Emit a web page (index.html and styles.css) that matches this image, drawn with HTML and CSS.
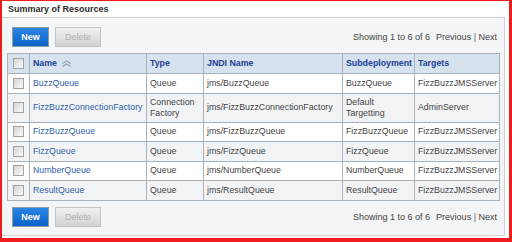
FILE: index.html
```html
<!DOCTYPE html>
<html>
<head>
<meta charset="utf-8">
<link rel="stylesheet" href="styles.css">
</head>
<body>
<div class="frame">
  <div class="heading">Summary of Resources</div>
  <div class="panel">
    <div class="toolbar">
      <div class="buttons">
        <span class="btn btn-new">New</span>
        <span class="btn btn-del">Delete</span>
      </div>
      <div class="pager">Showing 1 to 6 of 6<span class="gap"></span>Previous <span class="sep">|</span> Next</div>
    </div>
    <table class="grid">
      <colgroup>
        <col class="c-cb"><col class="c-name"><col class="c-type"><col class="c-jndi"><col class="c-sub"><col class="c-tgt">
      </colgroup>
      <thead>
        <tr>
          <th class="cb"><span class="check"></span></th>
          <th>Name <svg class="sort" width="11" height="7" viewBox="0 0 11 7"><polyline points="1.5,3.5 5.5,0.8 9.5,3.5" /><polyline points="1.5,6.5 5.5,3.8 9.5,6.5" /></svg></th>
          <th>Type</th>
          <th>JNDI Name</th>
          <th>Subdeployment</th>
          <th>Targets</th>
        </tr>
      </thead>
      <tbody>
        <tr>
          <td class="cb"><span class="check"></span></td>
          <td><a class="link">BuzzQueue</a></td>
          <td>Queue</td>
          <td>jms/BuzzQueue</td>
          <td>BuzzQueue</td>
          <td>FizzBuzzJMSServer</td>
        </tr>
        <tr class="tall">
          <td class="cb"><span class="check"></span></td>
          <td><a class="link">FizzBuzzConnectionFactory</a></td>
          <td>Connection<br>Factory</td>
          <td>jms/FizzBuzzConnectionFactory</td>
          <td>Default<br>Targetting</td>
          <td>AdminServer</td>
        </tr>
        <tr>
          <td class="cb"><span class="check"></span></td>
          <td><a class="link">FizzBuzzQueue</a></td>
          <td>Queue</td>
          <td>jms/FizzBuzzQueue</td>
          <td>FizzBuzzQueue</td>
          <td>FizzBuzzJMSServer</td>
        </tr>
        <tr>
          <td class="cb"><span class="check"></span></td>
          <td><a class="link">FizzQueue</a></td>
          <td>Queue</td>
          <td>jms/FizzQueue</td>
          <td>FizzQueue</td>
          <td>FizzBuzzJMSServer</td>
        </tr>
        <tr>
          <td class="cb"><span class="check"></span></td>
          <td><a class="link">NumberQueue</a></td>
          <td>Queue</td>
          <td>jms/NumberQueue</td>
          <td>NumberQueue</td>
          <td>FizzBuzzJMSServer</td>
        </tr>
        <tr>
          <td class="cb"><span class="check"></span></td>
          <td><a class="link">ResultQueue</a></td>
          <td>Queue</td>
          <td>jms/ResultQueue</td>
          <td>ResultQueue</td>
          <td>FizzBuzzJMSServer</td>
        </tr>
      </tbody>
    </table>
    <div class="toolbar bottom">
      <div class="buttons">
        <span class="btn btn-new">New</span>
        <span class="btn btn-del">Delete</span>
      </div>
      <div class="pager">Showing 1 to 6 of 6<span class="gap"></span>Previous <span class="sep">|</span> Next</div>
    </div>
  </div>
</div>
</body>
</html>
```
FILE: styles.css
```css
html, body {
  margin: 0;
  padding: 0;
  background: #ffffff;
}
body {
  font-family: "Liberation Sans", Arial, sans-serif;
  color: #444;
}
.frame {
  width: 512px;
  height: 242px;
  box-sizing: border-box;
  border-style: solid;
  border-color: #ee1c1c;
  border-width: 1px 3px 4px 2px;
  background: #ffffff;
  display: flex;
  flex-direction: column;
}
.heading {
  height: 16px;
  box-sizing: border-box;
  padding: 3px 0 0 6px;
  font-size: 9px;
  font-weight: bold;
  line-height: 11px;
  color: #2b2b2b;
}
.panel {
  margin-right: 4px;
  background: #f4f5f6;
  border-top: 1px solid #cfd2d5;
  border-right: 1px solid #cfd2d5;
  border-bottom: 1px solid #cfd2d5;
  padding: 9px 5px 8px 5px;
  display: flex;
  flex-direction: column;
}
.toolbar {
  height: 20px;
  display: flex;
  align-items: center;
  justify-content: space-between;
  padding: 0 2px 0 5px;
}
.toolbar.bottom {
  margin-top: 6px;
}
.buttons {
  display: flex;
  gap: 6px;
  height: 20px;
}
.btn {
  box-sizing: border-box;
  height: 20px;
  display: flex;
  align-items: center;
  justify-content: center;
  font-size: 9px;
  font-weight: bold;
}
.btn-new {
  width: 37px;
  color: #ffffff;
  border: 1px solid #8d9aa8;
  background: linear-gradient(#2b85e2, #0d62c9);
}
.btn-del {
  width: 46px;
  color: #b3b3b3;
  font-weight: normal;
  border: 1px solid #c3c3c3;
  background: linear-gradient(#f1f1f1, #d2d2d2);
}
.pager {
  font-size: 9px;
  color: #444;
  white-space: nowrap;
}
.pager .gap {
  display: inline-block;
  width: 6px;
}
.pager .sep {
  color: #666;
}
.grid {
  margin-top: 6px;
  width: 492px;
  border-collapse: collapse;
  table-layout: fixed;
  font-size: 8.8px;
  border: 1px solid #a8b2bd;
}
.c-cb { width: 22px; }
.c-name { width: 117px; }
.c-type { width: 57px; }
.c-jndi { width: 139px; }
.c-sub { width: 72px; }
.c-tgt { width: 85px; }
.grid th, .grid td {
  border: 1px solid #a8b2bd;
  padding: 0 3px;
  text-align: left;
  white-space: nowrap;
  line-height: 11px;
}
.grid thead tr {
  height: 20px;
  background: #d7e2ef;
}
.grid th {
  color: #223e93;
  font-weight: bold;
}
.grid tbody tr {
  height: 19.5px;
  background: #ffffff;
}
.grid tbody tr:nth-child(even) {
  background: #f1f3f5;
}
.grid tbody tr.tall {
  height: 29px;
}
.grid td {
  color: #444;
}
.grid .cb {
  padding: 0;
  text-align: center;
}
.check {
  display: inline-block;
  width: 9px;
  height: 9px;
  border: 1px solid #a3a3a3;
  background: linear-gradient(135deg, #d4d4d4, #fafafa);
  vertical-align: middle;
}
.link {
  color: #2f62a9;
  text-decoration: none;
}
.sort {
  vertical-align: middle;
  margin-left: 2px;
}
.sort polyline {
  fill: none;
  stroke: #8a9bb6;
  stroke-width: 1.1;
}
```
